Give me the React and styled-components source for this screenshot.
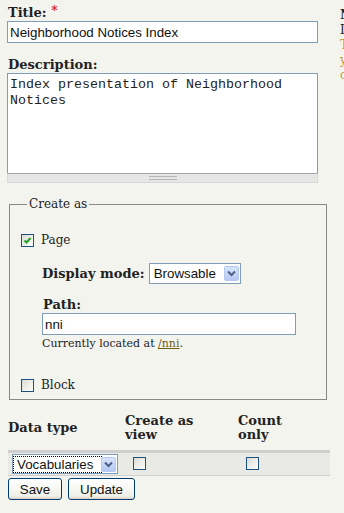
import React from "react";
import styled, { createGlobalStyle } from "styled-components";

const GlobalStyle = createGlobalStyle`
  html, body {
    margin: 0;
    padding: 0;
    background: #f4f4ef;
  }
  body {
    font-family: "DejaVu Serif", Georgia, serif;
    color: #222;
    overflow: hidden;
  }
`;

const Page = styled.div`
  display: flex;
  width: 344px;
  height: 513px;
  overflow: hidden;
`;

const Main = styled.div`
  width: 340px;
  flex: none;
  padding: 0 0 0 7px;
  box-sizing: border-box;
`;

const Sidebar = styled.div`
  flex: none;
  width: 200px;
  padding: 7px 0 0 0;
  font-size: 12px;
  line-height: 15px;
  h3 {
    margin: 0;
    font-size: 13px;
    font-weight: bold;
    line-height: 16px;
  }
  p {
    margin: 0;
  }
`;

const Hint = styled.p`
  color: #c8983c;
`;

const Label = styled.label`
  display: block;
  font-weight: bold;
  font-size: 13px;
  line-height: 16px;
  margin-top: ${(p) => p.$top || 0}px;
  padding-left: 1px;
`;

const Required = styled.span`
  color: #d22;
  font-size: 12px;
  vertical-align: 2px;
`;

const TextInput = styled.input`
  display: block;
  box-sizing: border-box;
  width: ${(p) => p.$width}px;
  height: 22px;
  border: 1px solid #7f9db9;
  background: #fff;
  padding: 1px 2px;
  margin: 0;
  font-family: "Liberation Sans", Arial, sans-serif;
  font-size: 13.33px;
  color: #111;
  outline: none;
`;

const TextArea = styled.textarea`
  display: block;
  box-sizing: border-box;
  width: 311px;
  height: 100px;
  margin: 0;
  resize: none;
  border: 1px solid #7f9db9;
  border-bottom: none;
  background: #fff;
  padding: 3px 2px;
  font-family: "Liberation Mono", "Courier New", monospace;
  font-size: 13.33px;
  line-height: 16px;
  color: #222;
  outline: none;
`;

const Grippie = styled.div`
  box-sizing: border-box;
  width: 311px;
  height: 10px;
  background: #e6e6e6;
  border: 1px solid #d8d8d8;
  border-top: 1px solid #a0a8b0;
  display: flex;
  justify-content: center;
  align-items: center;
  &::after {
    content: "";
    width: 28px;
    height: 4px;
    border-top: 1px solid #b8b8b8;
    border-bottom: 1px solid #b8b8b8;
    box-sizing: border-box;
  }
`;

const Fieldset = styled.fieldset`
  margin: 14px 0 0 2px;
  width: 318px;
  box-sizing: border-box;
  border: 1px solid #888;
  padding: 14px 0 6px 11px;
  legend {
    font-size: 12px;
    padding: 0 2px;
    margin-left: 6px;
    color: #222;
  }
`;

const CheckRow = styled.label`
  display: flex;
  align-items: center;
  gap: 7px;
  font-size: 12px;
  height: 16px;
  margin-top: ${(p) => p.$top || 0}px;
`;

const Check = styled.span`
  display: inline-block;
  position: relative;
  box-sizing: border-box;
  width: 13px;
  height: 13px;
  border: 1px solid #1c5180;
  background: linear-gradient(135deg, #dcdcd7 0%, #f4f4f0 70%, #fff 100%);
  flex: none;
`;

const Indent = styled.div`
  padding-left: 21px;
`;

const ModeRow = styled.div`
  display: flex;
  align-items: center;
  gap: 4px;
  margin-top: 15px;
`;

const InlineLabel = styled.span`
  font-weight: bold;
  font-size: 13px;
`;

const Select = styled.div`
  display: inline-flex;
  align-items: center;
  box-sizing: border-box;
  height: ${(p) => p.$h || 21}px;
  border: 1px solid #7f9db9;
  background: #fff;
  padding: 1px;
  font-family: "Liberation Sans", Arial, sans-serif;
  font-size: 13.33px;
  color: #111;
`;

const SelectText = styled.span`
  padding: 0 ${(p) => p.$pad || 6}px 0 3px;
  outline: ${(p) => (p.$focus ? "1px dotted #000" : "none")};
  line-height: 15px;
`;

const SelectButton = styled.span`
  width: 15px;
  height: 15px;
  box-sizing: border-box;
  border: 1px solid #b4c8f0;
  border-radius: 2px;
  background: linear-gradient(#d8e4fc, #b4c8f4);
  display: flex;
  align-items: center;
  justify-content: center;
`;

const Help = styled.div`
  font-size: 11px;
  line-height: 14px;
  margin-top: 2px;
  a {
    color: #6e5b12;
    text-decoration: underline;
  }
`;

const Table = styled.table`
  border-collapse: collapse;
  width: 322px;
  margin: 12px 0 0 1px;
  th {
    text-align: left;
    font-size: 13px;
    line-height: 14px;
    font-weight: bold;
    padding: 2px 0 8px 0;
    border-bottom: 3px solid #cfcfcf;
    vertical-align: middle;
  }
  td {
    background: #e9e9e6;
    border-bottom: 1px solid #d0d0d0;
    height: 22px;
    padding: 0 0 0 8px;
    vertical-align: middle;
  }
  td:first-child {
    padding-left: 4px;
  }
`;

const Buttons = styled.div`
  display: flex;
  gap: 6px;
  margin: 2px 0 0 1px;
`;

const Button = styled.button`
  height: 22px;
  box-sizing: border-box;
  padding: 0 10px;
  border: 1px solid #003c74;
  border-radius: 3px;
  background: linear-gradient(#fff, #f0f0ea 85%, #d6d0c5);
  font-family: "Liberation Sans", Arial, sans-serif;
  font-size: 13.33px;
  color: #111;
  width: ${(p) => p.$w}px;
`;

const Chevron = () => (
  <svg width="9" height="7" viewBox="0 0 9 7">
    <path d="M1 1.5 L4.5 5 L8 1.5" fill="none" stroke="#4d6185" strokeWidth="2" />
  </svg>
);

const Tick = () => (
  <svg
    width="11"
    height="11"
    viewBox="0 0 11 11"
    style={{ position: "absolute", left: 0, top: 0 }}
  >
    <path d="M2.5 5.5 L4.5 7.5 L8.5 3" fill="none" stroke="#21a121" strokeWidth="2" />
  </svg>
);

export default function App() {
  return (
    <Page>
      <GlobalStyle />
      <Main>
        <Label $top={3}>
          Title: <Required>*</Required>
        </Label>
        <TextInput $width={311} defaultValue="Neighborhood Notices Index" />

        <Label $top={14}>Description:</Label>
        <TextArea defaultValue={"Index presentation of Neighborhood\nNotices"} />
        <Grippie />

        <Fieldset>
          <legend>Create as</legend>
          <CheckRow $top={7}>
            <Check>
              <Tick />
            </Check>
            Page
          </CheckRow>
          <Indent>
            <ModeRow>
              <InlineLabel>Display mode:</InlineLabel>
              <Select>
                <SelectText $pad={8}>Browsable</SelectText>
                <SelectButton>
                  <Chevron />
                </SelectButton>
              </Select>
            </ModeRow>
            <Label $top={13}>Path:</Label>
            <TextInput $width={254} defaultValue="nni" />
            <Help>
              Currently located at <a href="#">/nni</a>.
            </Help>
          </Indent>
          <CheckRow $top={26}>
            <Check />
            Block
          </CheckRow>
        </Fieldset>

        <Table>
          <thead>
            <tr>
              <th style={{ width: 117 }}>Data type</th>
              <th style={{ width: 113 }}>
                Create as
                <br />
                view
              </th>
              <th>
                Count
                <br />
                only
              </th>
            </tr>
          </thead>
          <tbody>
            <tr>
              <td>
                <Select $h={20}>
                  <SelectText $focus $pad={8}>
                    Vocabularies
                  </SelectText>
                  <SelectButton>
                    <Chevron />
                  </SelectButton>
                </Select>
              </td>
              <td>
                <Check />
              </td>
              <td>
                <Check />
              </td>
            </tr>
          </tbody>
        </Table>

        <Buttons>
          <Button $w={54}>Save</Button>
          <Button $w={67}>Update</Button>
        </Buttons>
      </Main>
      <Sidebar>
        <h3>Notes</h3>
        <p>Index views list content</p>
        <Hint>This form creates views;</Hint>
        <Hint>you can edit them later</Hint>
        <Hint>once they are saved.</Hint>
      </Sidebar>
    </Page>
  );
}
